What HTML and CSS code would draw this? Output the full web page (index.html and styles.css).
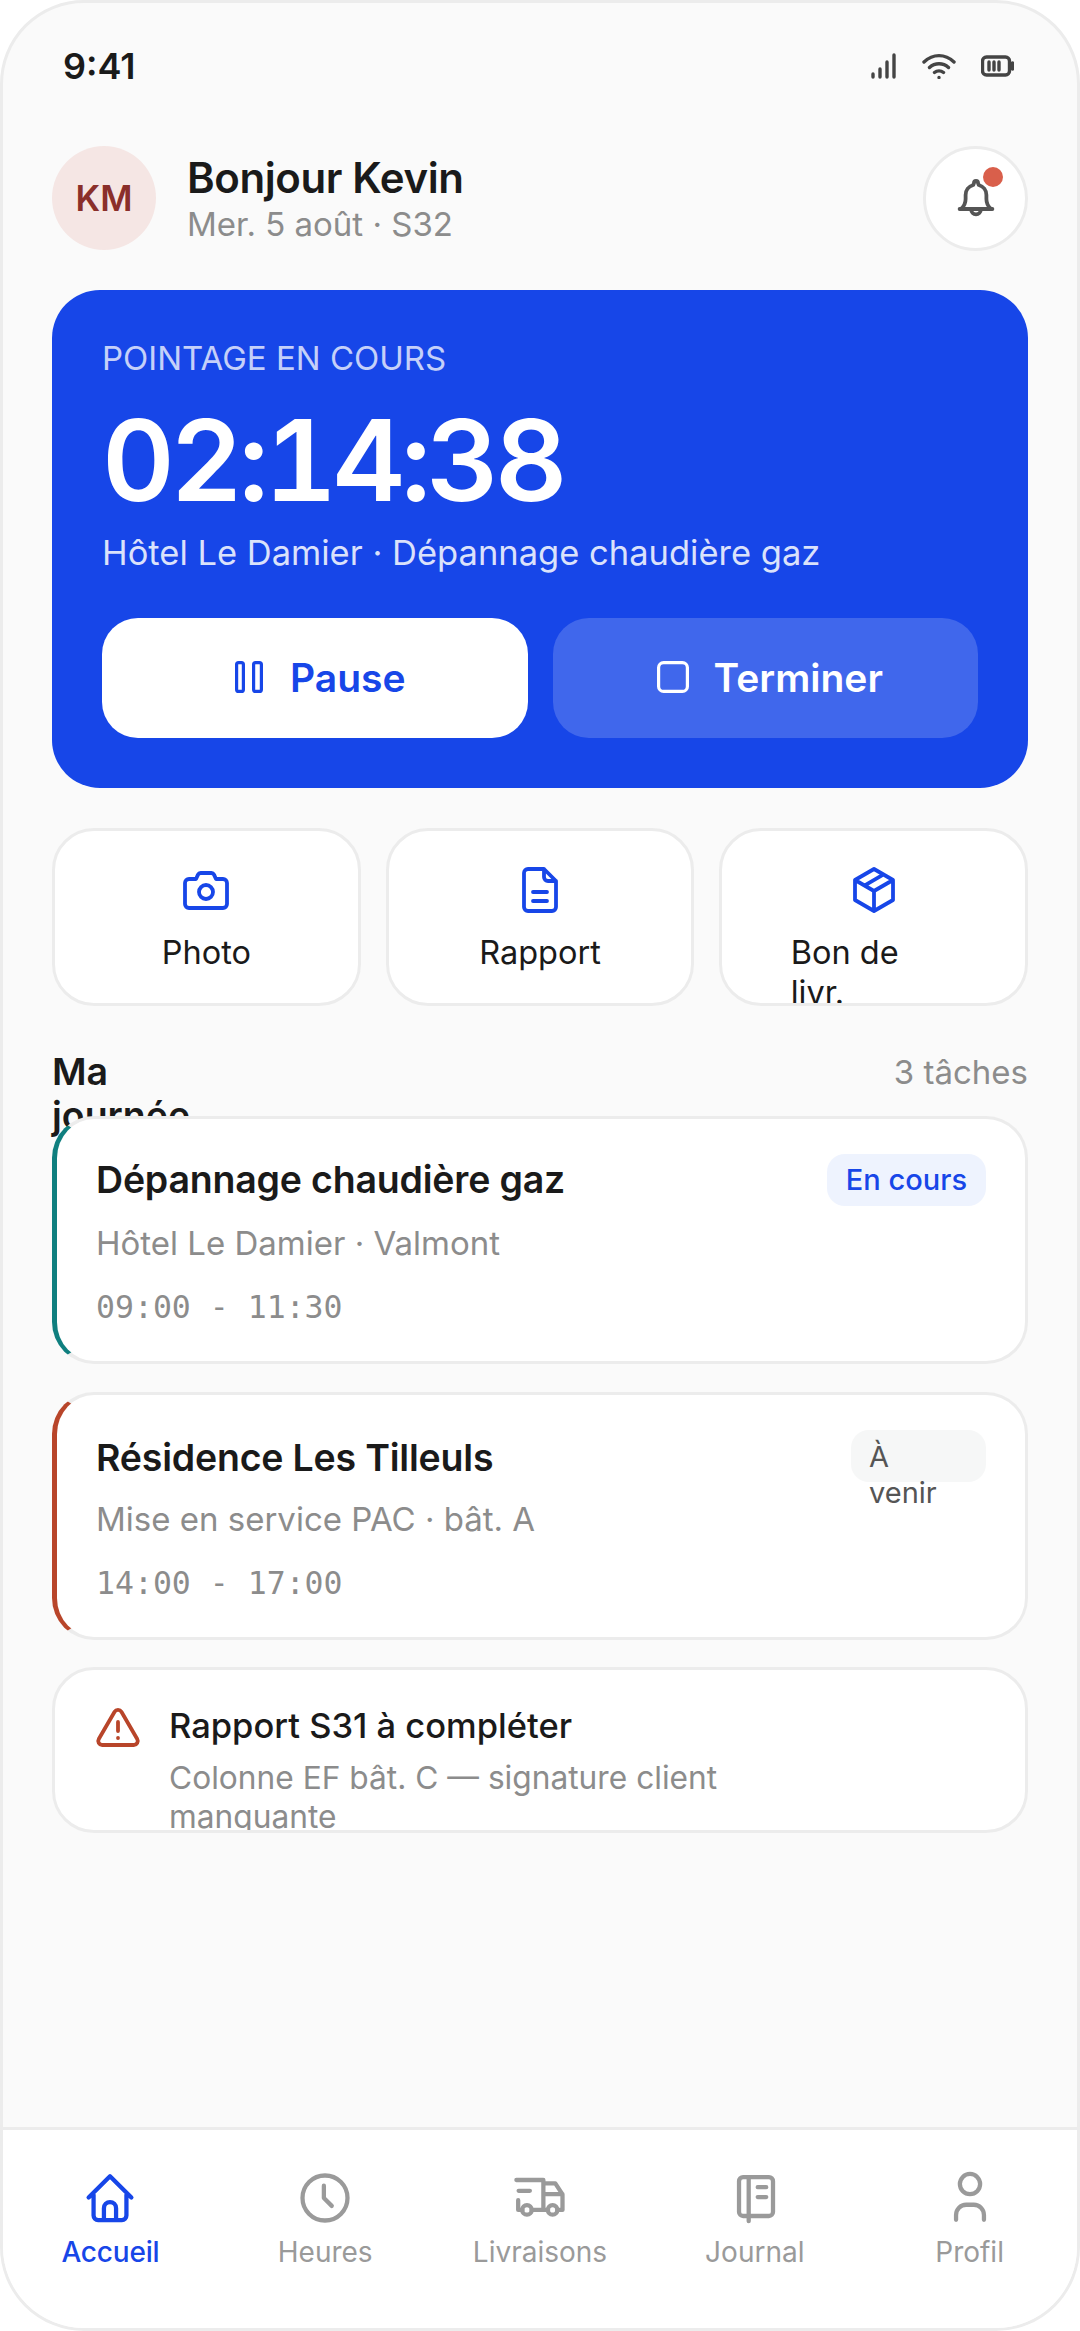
FILE: index.html
```html
<!DOCTYPE html>
<html lang="fr">
<head>
  <meta charset="UTF-8">
  <title>Accueil</title>
  <link rel="stylesheet" href="styles.css">
</head>
<body>
  <div class="phone">
    <div class="status-bar">
      <span class="clock">9:41</span>
      <div class="status-icons">
        <svg width="26" height="26" viewBox="0 0 26 26" class="ico-status"><path d="M2 24v-3M9 24v-8M16 24V9M23 24V2"/></svg>
        <svg width="34" height="26" viewBox="0 0 34 26" class="ico-status"><path d="M2 9c9-8.500 21-8.500 30 0M7.500 14.500c5.500-5 13.500-5 19 0M12.500 19.500c2.500-2 6.500-2 9 0M17 24.500h.01"/></svg>
        <svg width="33" height="22" viewBox="0 0 33 22" class="ico-status"><rect x="1.500" y="2" width="27" height="18" rx="4"/><path d="M8 7v8M13 7v8M18 7v8M31.500 8v6"/></svg>
      </div>
    </div>

    <div class="content">
      <div class="greet">
        <div class="avatar">KM</div>
        <div class="greet-text">
          <div class="greet-name">Bonjour Kevin</div>
          <div class="greet-date">Mer. 5 août · S32</div>
        </div>
        <button class="bell-btn">
          <svg width="48" height="48" viewBox="0 0 24 24" class="ico ico-bell"><path d="M4.500 17.500c1.500-1.300 2.300-3 2.300-5V10.500a5.200 5.200 0 0 1 3.800-5l.4-1a1 1 0 0 1 2 0l.4 1a5.200 5.200 0 0 1 3.800 5v2c0 2 .8 3.700 2.300 5zM3.800 17.500h16.400M9.600 17.800a2.400 2.400 0 0 0 4.800 0"/></svg>
          <span class="bell-dot"></span>
        </button>
      </div>

      <div class="hero">
        <div class="hero-label">POINTAGE EN COURS</div>
        <div class="hero-timer">02:14:38</div>
        <div class="hero-sub">Hôtel Le Damier · Dépannage chaudière gaz</div>
        <div class="hero-actions">
          <button class="btn btn-pause">
            <svg width="36" height="36" viewBox="0 0 36 36" class="ico ico-btn"><rect x="5.600" y="3.600" width="6.800" height="28.800" rx="2"/><rect x="22.600" y="3.600" width="7.800" height="28.800" rx="2"/></svg>
            Pause
          </button>
          <button class="btn btn-stop">
            <svg width="36" height="36" viewBox="0 0 36 36" class="ico ico-btn"><rect x="3.600" y="3.600" width="28.800" height="28.800" rx="5"/></svg>
            Terminer
          </button>
        </div>
      </div>

      <div class="quick">
        <div class="tile">
          <svg width="48" height="48" viewBox="0 0 24 24" class="ico ico-blue"><path d="M3.500 6.500H7l1-2.200a1.500 1.500 0 0 1 1.400-.8h5.200a1.500 1.500 0 0 1 1.400.8l1 2.200h3.500a2 2 0 0 1 2 2V19a2 2 0 0 1-2 2h-17a2 2 0 0 1-2-2V8.500a2 2 0 0 1 2-2z"/><circle cx="12" cy="13" r="3.500"/></svg>
          <span class="tile-label">Photo</span>
        </div>
        <div class="tile">
          <svg width="48" height="48" viewBox="0 0 24 24" class="ico ico-blue"><path d="M14 1.500H6a2 2 0 0 0-2 2v17a2 2 0 0 0 2 2h12a2 2 0 0 0 2-2V7.500zM14 1.500v4a2 2 0 0 0 2 2h4M8.500 13h7M8.500 17.500h7"/></svg>
          <span class="tile-label">Rapport</span>
        </div>
        <div class="tile">
          <svg width="48" height="48" viewBox="0 0 24 24" class="ico ico-blue"><path d="M12 1.500l9.500 5.500v10l-9.500 5.500-9.500-5.500V7zM2.500 7l9.500 5.500L21.500 7M12 12.500v10M7.200 9.800l9.600-5.600"/></svg>
          <span class="tile-label">Bon de livr.</span>
        </div>
      </div>

      <div class="section-head">
        <h2 class="section-title">Ma journée</h2>
        <span class="section-count">3 tâches</span>
      </div>

      <div class="task task-teal">
        <div class="task-top">
          <span class="task-title">Dépannage chaudière gaz</span>
          <span class="tag tag-blue">En cours</span>
        </div>
        <div class="task-sub">Hôtel Le Damier · Valmont</div>
        <div class="task-time">09:00 - 11:30</div>
      </div>

      <div class="task task-red">
        <div class="task-top">
          <span class="task-title">Résidence Les Tilleuls</span>
          <span class="tag tag-gray">À venir</span>
        </div>
        <div class="task-sub">Mise en service PAC · bât. A</div>
        <div class="task-time">14:00 - 17:00</div>
      </div>

      <div class="alert">
        <svg width="48" height="48" viewBox="0 0 24 24" class="ico ico-red"><path d="M10.300 3.900 2.400 17.500a2 2 0 0 0 1.700 3h15.800a2 2 0 0 0 1.700-3L13.700 3.900a2 2 0 0 0-3.400 0zM12 9v4.500M12 17h.01"/></svg>
        <div class="alert-body">
          <div class="alert-title">Rapport S31 à compléter</div>
          <div class="alert-text">Colonne EF bât. C — signature client manquante</div>
        </div>
      </div>
    </div>

    <nav class="nav">
      <div class="nav-item active">
        <svg width="54" height="54" viewBox="0 0 24 24" class="ico"><path d="M2.500 11.800 12 2.300l9.500 9.500M4.700 10.500V19.800a2 2 0 0 0 2 2h10.600a2 2 0 0 0 2-2V10.500M9.300 21.800v-5.300a2.700 2.700 0 0 1 5.400 0v5.300"/></svg>
        <span>Accueil</span>
      </div>
      <div class="nav-item">
        <svg width="54" height="54" viewBox="0 0 24 24" class="ico"><circle cx="12" cy="12" r="10"/><path d="M11.500 6.500v5.500l3.500 3.500"/></svg>
        <span>Heures</span>
      </div>
      <div class="nav-item">
        <svg width="54" height="54" viewBox="0 0 24 24" class="ico"><path d="M1.500 4h12v13.300M2.500 8.800h5M2.300 13v4.300h1.900M8.300 17.300h7.300M13.500 5.500h5.300l3.200 4.900v6.900h-2.300M13.500 10.300H22"/><circle cx="6.200" cy="17.300" r="2.100"/><circle cx="17.600" cy="17.300" r="2.100"/></svg>
        <span>Livraisons</span>
      </div>
      <div class="nav-item">
        <svg width="54" height="54" viewBox="0 0 24 24" class="ico"><rect x="4.900" y="2.700" width="15.100" height="17.300" rx="1.800"/><path d="M9.200 2.700v19.600M13.200 7.200H17M13.200 11.600H17"/></svg>
        <span>Journal</span>
      </div>
      <div class="nav-item">
        <svg width="54" height="54" viewBox="0 0 24 24" class="ico"><circle cx="12" cy="5.800" r="4.500"/><path d="M5.800 21.700v-2.200a4.500 4.500 0 0 1 4.500-4.500h3.400a4.500 4.500 0 0 1 4.500 4.500v2.200"/></svg>
        <span>Profil</span>
      </div>
    </nav>
  </div>
</body>
</html>
```

FILE: styles.css
```css
:root {
  --blue: #1746e8;
  --text: #1a1a1a;
  --muted: #8c8c8c;
  --line: #ececec;
}
* {
  box-sizing: border-box;
}
body {
  margin: 0;
  background: #fff;
  font-family: Inter, "Liberation Sans", sans-serif;
  color: var(--text);
}
.phone {
  width: 1080px;
  height: 2331px;
  display: flex;
  flex-direction: column;
  background: #fafafa;
  border: 3px solid var(--line);
  border-radius: 84px;
  overflow: hidden;
}
.ico {
  fill: none;
  stroke: currentColor;
  stroke-width: 1.9;
  stroke-linecap: round;
  stroke-linejoin: round;
  flex: none;
}
.ico-blue {
  color: var(--blue);
}
.ico-red {
  color: #b8452a;
}
.ico-bell {
  color: #555;
}
.ico-btn {
  stroke-width: 3.2;
}

/* status bar */
.status-bar {
  height: 126px;
  flex: none;
  display: flex;
  align-items: center;
  justify-content: space-between;
  padding: 0 63px 0 60px;
}
.clock {
  font-size: 36px;
  font-weight: 600;
}
.status-icons {
  display: flex;
  align-items: center;
  gap: 25px;
}
.ico-status {
  fill: none;
  stroke: #444;
  stroke-width: 3.400;
  stroke-linecap: round;
  stroke-linejoin: round;
}

.content {
  flex: 1;
  padding: 17px 49px 0;
}

/* greeting */
.greet {
  display: flex;
  align-items: center;
  height: 104px;
}
.avatar {
  width: 104px;
  height: 104px;
  flex: none;
  border-radius: 50%;
  background: #f5e6e4;
  color: #8a2f2a;
  font-size: 35px;
  font-weight: 600;
  display: flex;
  align-items: center;
  justify-content: center;
}
.greet-text {
  flex: 1;
  margin-left: 31px;
  padding-top: 3px;
}
.greet-name {
  font-size: 42px;
  font-weight: 600;
  letter-spacing: -0.4px;
  line-height: 48px;
}
.greet-date {
  font-size: 33px;
  line-height: 44px;
  color: var(--muted);
}
.bell-btn {
  position: relative;
  width: 105px;
  height: 105px;
  flex: none;
  padding: 0;
  border-radius: 50%;
  background: #fff;
  border: 3px solid var(--line);
  display: flex;
  align-items: center;
  justify-content: center;
}
.bell-dot {
  position: absolute;
  top: 18px;
  right: 22px;
  width: 20px;
  height: 20px;
  border-radius: 50%;
  background: #d95f4b;
}

/* time tracking card */
.hero {
  margin-top: 40px;
  height: 498px;
  padding: 50px;
  background: var(--blue);
  border-radius: 48px;
  color: #fff;
}
.hero-label {
  font-size: 33px;
  line-height: 36px;
  color: rgba(255, 255, 255, 0.75);
}
.hero-timer {
  margin-top: 24px;
  font-size: 112.500px;
  line-height: 120px;
  font-weight: 600;
  font-variant-numeric: tabular-nums;
  letter-spacing: -4.500px;
}
.hero-sub {
  margin-top: 11px;
  font-size: 34.500px;
  line-height: 44px;
  color: rgba(255, 255, 255, 0.85);
}
.hero-actions {
  margin-top: 43px;
  display: flex;
  gap: 25px;
}
.btn {
  flex: 1;
  height: 120px;
  padding: 0 0 2px 7px;
  border: none;
  border-radius: 36px;
  font-family: inherit;
  font-size: 39px;
  font-weight: 600;
  display: flex;
  align-items: center;
  justify-content: center;
  gap: 23px;
}
.btn-pause {
  background: #fff;
  color: var(--blue);
}
.btn-stop {
  background: rgba(255, 255, 255, 0.18);
  color: #fff;
}

/* quick actions */
.quick {
  margin-top: 40px;
  display: grid;
  grid-template-columns: repeat(3, 1fr);
  gap: 25px;
}
.tile {
  height: 178px;
  padding-top: 35px;
  background: #fff;
  border: 3px solid var(--line);
  border-radius: 42px;
  overflow: hidden;
  display: flex;
  flex-direction: column;
  align-items: center;
}
.tile-label {
  max-width: 166px;
  margin-top: 19px;
  font-size: 32.500px;
  line-height: 40px;
  font-weight: 400;
}

/* day section */
.section-head {
  margin-top: 44px;
  height: 66px;
  display: flex;
  justify-content: space-between;
  align-items: flex-start;
}
.section-title {
  margin: 0;
  max-width: 150px;
  font-size: 37.500px;
  line-height: 44px;
  font-weight: 600;
}
.section-count {
  font-size: 33px;
  line-height: 44px;
  color: var(--muted);
}
.task {
  position: relative;
  height: 248px;
  margin-bottom: 28px;
  padding: 35px 39px 0;
  background: #fff;
  border: 3px solid var(--line);
  border-radius: 42px;
}
.task-teal {
  border-left: 5px solid #0f7f7f;
}
.task-red {
  margin-bottom: 27px;
  border-left: 5px solid #b8452a;
}
.task-top {
  display: flex;
  align-items: center;
  justify-content: space-between;
  height: 52px;
}
.task-title {
  font-size: 37.500px;
  line-height: 44px;
  font-weight: 600;
  letter-spacing: -0.2px;
}
.task-red .task-title {
  padding-top: 3px;
}
.tag {
  flex: none;
  height: 52px;
  padding: 8px 19px;
  border-radius: 18px;
  font-size: 29px;
  line-height: 36px;
  font-weight: 500;
}
.tag-blue {
  background: #eef3fe;
  color: var(--blue);
}
.tag-gray {
  width: 135px;
  padding: 9px 30px 0 18px;
  background: #f6f7f7;
  color: #555;
  font-weight: 400;
}
.task-sub {
  margin-top: 16px;
  font-size: 33px;
  line-height: 42px;
  color: var(--muted);
}
.task-time {
  margin-top: 23px;
  font-family: "DejaVu Sans Mono", monospace;
  font-size: 31.500px;
  line-height: 40px;
  color: var(--muted);
}

/* alert */
.alert {
  height: 166px;
  padding: 34px 39px 0;
  display: flex;
  align-items: flex-start;
  gap: 27px;
  background: #fff;
  border: 3px solid var(--line);
  border-radius: 42px;
  overflow: hidden;
}
.alert-title {
  font-size: 34.500px;
  line-height: 44px;
  font-weight: 500;
}
.alert-text {
  margin-top: 10px;
  max-width: 600px;
  font-size: 31.700px;
  line-height: 39px;
  color: var(--muted);
}

/* bottom nav */
.nav {
  height: 201px;
  flex: none;
  display: grid;
  grid-template-columns: repeat(5, 1fr);
  padding-top: 41px;
  background: #fff;
  border-top: 3px solid var(--line);
}
.nav-item {
  display: flex;
  flex-direction: column;
  align-items: center;
  color: #9a9a9a;
}
.nav-item span {
  margin-top: 9px;
  font-size: 28px;
  line-height: 36px;
}
.nav-item.active {
  color: var(--blue);
}
.nav-item.active span {
  font-weight: 500;
  letter-spacing: -0.2px;
}
```
